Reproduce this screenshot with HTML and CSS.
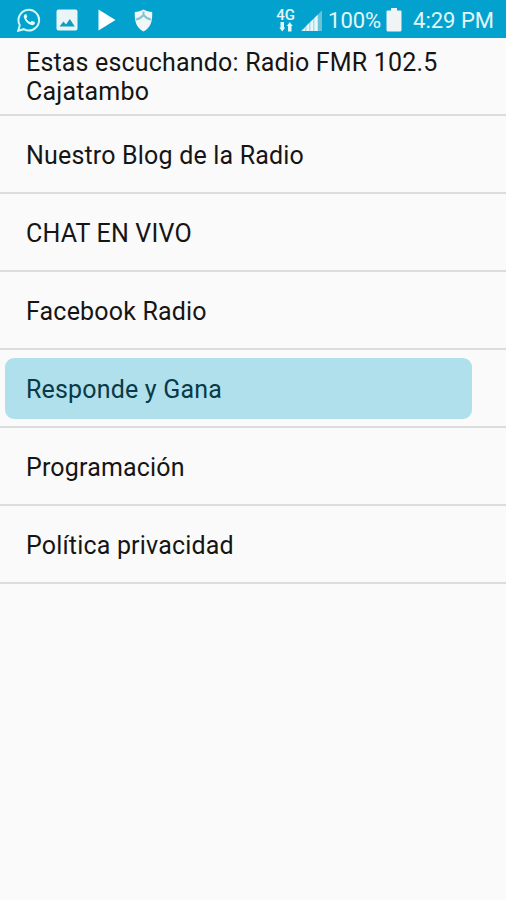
FILE: index.html
```html
<!DOCTYPE html>
<html lang="es">
<head>
  <meta charset="UTF-8">
  <meta name="viewport" content="width=device-width, initial-scale=1.0">
  <title>Radio FMR 102.5 Cajatambo</title>
  <link rel="stylesheet" href="styles.css">
</head>
<body>
  <header class="status-bar">
    <div class="notifications">
      <svg class="icon-whatsapp" width="24" height="24" viewBox="0 0 24 24">
        <path d="M1.2 22.8l1.6-5.6a10.3 10.3 0 1 1 4 4z" fill="none" stroke="#d3f7f5" stroke-width="2"/>
        <path d="M8.2 6.2c-1.400.8-1.700 2.200-1.200 3.600 1.200 3.600 3.700 6.200 7.400 7.300 1.500.4 3-.3 3.500-1.800.2-.6.100-1-.3-1.200l-2.200-1.100c-.4-.2-.7-.1-1 .3l-.9 1c-2-.8-3.400-2.200-4.300-4l.8-1c.3-.3.3-.6.2-.9l-.9-2.100c-.2-.4-.6-.4-1.100-.1z" fill="#e2fbfa"/>
      </svg>
      <svg class="icon-picture" width="22" height="22" viewBox="0 0 22 22">
        <rect x=".5" y=".5" width="21" height="21" rx="2" fill="#eaf5f8"/>
        <path d="M3.500 17.500l4-5 2.500 3 3.800-5.500 5 7.500z" fill="#0f9dc0"/>
      </svg>
      <svg class="icon-play" width="18" height="22" viewBox="0 0 18 22">
        <path d="M.5.500L17.500 11 .5 21.500z" fill="#fff"/>
      </svg>
      <svg class="icon-shield" width="19" height="23" viewBox="0 0 19 23">
        <path d="M9.500.500c2.700 1.500 5.500 2.300 8.700 2.500C18.500 12 17 18.500 9.500 22.500 2 18.500.5 12 .8 3c3.200-.2 6-1 8.700-2.500z" fill="#f1f6f7"/>
        <path d="M2 10.500c3-.3 5-1.700 7.500-4.500 2.500 2.800 4.500 4.200 7.500 4.500M9.500 2.500V6" fill="none" stroke="#86c4d0" stroke-width="2"/>
      </svg>
    </div>
    <div class="system">
      <div class="network">
        <span>4G</span>
        <svg width="14" height="10" viewBox="0 0 14 10">
          <path d="M1.500 0h3.500v5.500h1.200L3.200 9.500.3 5.500h1.200zM9 9.500h3.500V4h1.200L10.800 0 7.800 4H9z" fill="#e4f7fa"/>
        </svg>
      </div>
      <svg class="icon-signal" width="21" height="21" viewBox="0 0 21 21">
        <path d="M0 21L17 4.500V21z" fill="#a9deea"/>
        <path d="M1 21l3-2.900V21zM5.500 15.700l2.500-2.400V21H5.500zM9.500 11.800l2.500-2.400V21H9.500zM13.500 7.900L16.500 5v16h-3z" fill="#e6f7fa"/>
        <path d="M17 4.500L21 .500V21h-4z" fill="#6cc3d8"/>
      </svg>
      <span class="battery-level">100%</span>
      <svg class="icon-battery" width="16" height="24" viewBox="0 0 16 24">
        <path d="M5 0h6v2.500h3.500q1 0 1 1V22q0 1.500-1.500 1.500H2Q.5 23.500.5 22V3.500q0-1 1-1H5z" fill="#f0f4f5"/>
      </svg>
      <span class="clock">4:29 PM</span>
    </div>
  </header>

  <ul class="menu">
    <li class="menu-item"><span>Estas escuchando: Radio FMR 102.5 Cajatambo</span></li>
    <li class="menu-item"><span>Nuestro Blog de la Radio</span></li>
    <li class="menu-item"><span>CHAT EN VIVO</span></li>
    <li class="menu-item"><span>Facebook Radio</span></li>
    <li class="menu-item selected"><span>Responde y Gana</span></li>
    <li class="menu-item"><span>Programación</span></li>
    <li class="menu-item"><span>Política privacidad</span></li>
  </ul>
</body>
</html>
```

FILE: styles.css
```css
* {
  box-sizing: border-box;
}
body {
  margin: 0;
  min-height: 100vh;
  background: #fafafa;
  color: #151515;
  font-family: Roboto, "Liberation Sans", sans-serif;
}
.status-bar {
  display: flex;
  justify-content: space-between;
  height: 38px;
  padding: 2px 12px 0 17px;
  background: #03a2ce;
  color: #e4f7fa;
}
.notifications,
.system {
  display: flex;
  align-items: center;
}
.icon-picture {
  margin-left: 15px;
}
.icon-play {
  margin-left: 20px;
}
.icon-shield {
  margin-left: 18px;
}
.network {
  display: flex;
  flex-direction: column;
  align-items: center;
  width: 21px;
  font-size: 15px;
  font-weight: 500;
  line-height: 14px;
}
.icon-signal {
  margin: 0 6px 0 5px;
}
.battery-level {
  width: 54px;
  font-size: 22px;
  white-space: nowrap;
}
.icon-battery {
  margin: 0 11px 0 4px;
}
.clock {
  font-size: 22px;
  white-space: nowrap;
}
.menu {
  margin: 0;
  padding: 0;
  list-style: none;
}
.menu-item {
  display: flex;
  align-items: center;
  height: 78px;
  padding: 2px 26px 0;
  border-bottom: 2px solid #dcdcdc;
  font-size: 25px;
  line-height: 29px;
  letter-spacing: 0.18px;
}
.selected {
  padding: 0 34px 0 5px;
}
.selected span {
  flex: 1;
  padding: 17px 21px 15px;
  border-radius: 9px;
  background: #b0e0eb;
  color: #0b3947;
}
```
